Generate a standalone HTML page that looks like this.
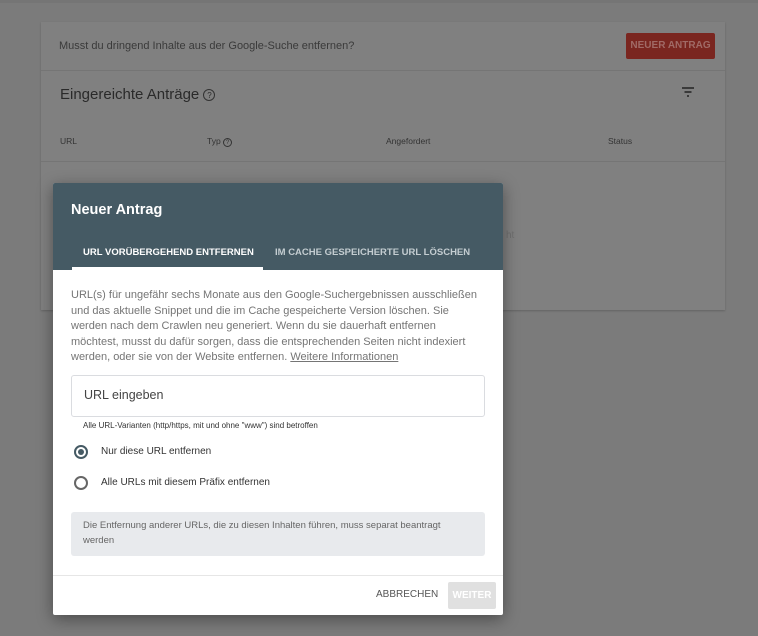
<!DOCTYPE html>
<html><head><meta charset="utf-8"><style>
*{box-sizing:border-box;margin:0;padding:0}
body{width:758px;height:636px;background:#7b7b7b;font-family:"Liberation Sans",sans-serif;position:relative;overflow:hidden}
.abs{position:absolute}
.card{left:41px;top:22px;width:684px;height:288px;background:#808080;box-shadow:0 1px 2px rgba(0,0,0,.2)}
.dlg{left:53px;top:183px;width:450px;height:432px;background:#fff;box-shadow:0 4px 16px rgba(0,0,0,.4);border-radius:2px;overflow:hidden}
.hd{left:0;top:0;width:450px;height:87px;background:#455a64}
.p{font-size:11px;color:#757575;line-height:15.5px;white-space:nowrap}
</style></head><body>
<div class="abs" style="left:0;top:0;width:758px;height:3px;background:#757575"></div>
<div class="abs card">
 <div class="abs" style="left:18px;top:18px;font-size:11px;color:#3a3a3a">Musst du dringend Inhalte aus der Google-Suche entfernen?</div>
 <div class="abs" style="left:585px;top:11px;width:89px;height:26px;background:#7a2620;border-radius:2px;color:#a06a66;font-size:10px;font-weight:bold;text-align:center;line-height:26px">NEUER ANTRAG</div>
 <div class="abs" style="left:0;top:48px;width:684px;height:1px;background:#757575"></div>
 <div class="abs" style="left:19px;top:64px;font-size:15px;color:#2a2a2a">Eingereichte Anträge <span style="display:inline-block;width:12px;height:12px;border:1px solid #333;border-radius:50%;font-size:8px;text-align:center;line-height:11px;vertical-align:1px">?</span></div>
 <svg class="abs" style="left:640px;top:64px" width="14" height="12"><path d="M1 2h12M3.5 6h7M6 10h2" stroke="#222" stroke-width="1.6"/></svg>
 <div class="abs" style="left:19px;top:114px;font-size:8.5px;color:#333">URL</div>
 <div class="abs" style="left:166px;top:114px;font-size:8.5px;color:#333">Typ <span style="display:inline-block;width:9px;height:9px;border:1px solid #333;border-radius:50%;font-size:6px;text-align:center;line-height:8px">?</span></div>
 <div class="abs" style="left:345px;top:114px;font-size:8.5px;color:#333">Angefordert</div>
 <div class="abs" style="left:567px;top:114px;font-size:8.5px;color:#333">Status</div>
 <div class="abs" style="left:0;top:139px;width:684px;height:1px;background:#757575"></div>
 <div class="abs" style="left:465px;top:208px;font-size:10px;color:#6f6f6f">ht</div>
</div>
<div class="abs dlg">
 <div class="abs hd">
  <div class="abs" style="left:18px;top:19px;font-size:14.5px;font-weight:bold;color:#fff">Neuer Antrag</div>
  <div class="abs" style="left:30px;top:64px;font-size:9.5px;font-weight:bold;color:#fff">URL VORÜBERGEHEND ENTFERNEN</div>
  <div class="abs" style="left:222px;top:64px;font-size:9.5px;font-weight:bold;color:#c4cdd1">IM CACHE GESPEICHERTE URL LÖSCHEN</div>
  <div class="abs" style="left:19px;top:84px;width:191px;height:3px;background:#fff"></div>
 </div>
 <div class="abs p" style="left:18px;top:105px">URL(s) für ungefähr sechs Monate aus den Google-Suchergebnissen ausschließen<br>und das aktuelle Snippet und die im Cache gespeicherte Version löschen. Sie<br>werden nach dem Crawlen neu generiert. Wenn du sie dauerhaft entfernen<br>möchtest, musst du dafür sorgen, dass die entsprechenden Seiten nicht indexiert<br>werden, oder sie von der Website entfernen. <u>Weitere Informationen</u></div>
 <div class="abs" style="left:18px;top:192px;width:414px;height:42px;border:1px solid #dadce0;border-radius:3px;font-size:12.5px;color:#444;padding:12px 0 0 12px">URL eingeben</div>
 <div class="abs" style="left:30px;top:238px;font-size:8px;color:#333">Alle URL-Varianten (http/https, mit und ohne "www") sind betroffen</div>
 <div class="abs" style="left:21px;top:262px;width:14px;height:14px;border:2px solid #455a64;border-radius:50%"><div style="margin:2px;width:6px;height:6px;border-radius:50%;background:#455a64"></div></div>
 <div class="abs" style="left:48px;top:263px;font-size:10px;color:#333">Nur diese URL entfernen</div>
 <div class="abs" style="left:21px;top:293px;width:14px;height:14px;border:2px solid #666;border-radius:50%"></div>
 <div class="abs" style="left:48px;top:294px;font-size:10px;color:#333">Alle URLs mit diesem Präfix entfernen</div>
 <div class="abs" style="left:18px;top:329px;width:414px;height:44px;background:#e8eaed;border-radius:3px;font-size:9.5px;color:#666;line-height:15px;padding:6px 12px">Die Entfernung anderer URLs, die zu diesen Inhalten führen, muss separat beantragt werden</div>
 <div class="abs" style="left:0;top:392px;width:450px;height:1px;background:#e6e6e6"></div>
 <div class="abs" style="left:323px;top:406px;font-size:10px;color:#555">ABBRECHEN</div>
 <div class="abs" style="left:395px;top:399px;width:48px;height:27px;background:#e0e0e0;border-radius:2px;color:#fff;font-size:10px;font-weight:bold;text-align:center;line-height:27px">WEITER</div>
</div>
</body></html>
